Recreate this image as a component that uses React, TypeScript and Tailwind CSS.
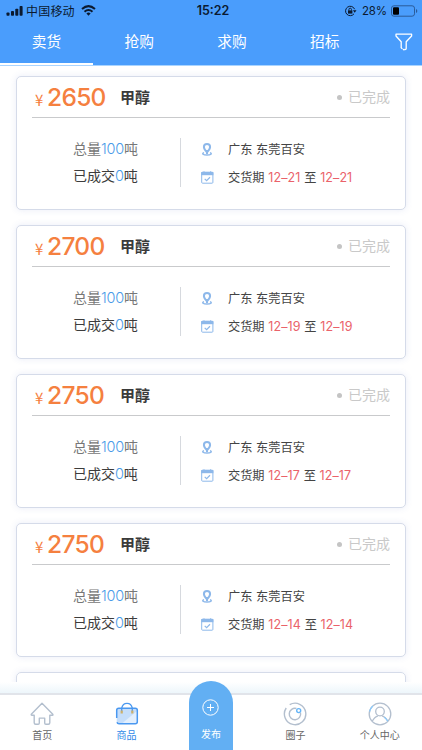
import clsx from 'clsx';

type Offer = { price: string; date: string };

const offers: Offer[] = [
    { price: '2650', date: '12–21' },
    { price: '2700', date: '12–19' },
    { price: '2750', date: '12–17' },
    { price: '2750', date: '12–14' },
];

const tabs = ['卖货', '抢购', '求购', '招标'];

const StatusBar = () => (
    <div className="grid h-[22px] grid-cols-3 items-center text-[12px] leading-[22px] text-[#0b1a30]">
        <div className="flex items-center pl-[6px]">
            <svg width="18" height="10" viewBox="0 0 18 10" fill="currentColor">
                <rect x="0.5" y="6.5" width="3" height="3.2" rx="0.8" />
                <rect x="5" y="5" width="3" height="4.7" rx="0.8" />
                <rect x="9.3" y="2.7" width="3" height="7" rx="0.8" />
                <rect x="13.6" y="0" width="3" height="9.7" rx="0.8" />
            </svg>
            <span className="-mt-px ml-[2px] whitespace-nowrap tracking-[0.2px]">中国移动</span>
            <svg className="-mt-px ml-[6px]" width="15" height="11" viewBox="0 0 15 11" fill="none" stroke="currentColor" strokeWidth="2">
                <path d="M1 4 Q7.5 -1.7 14 4" />
                <path d="M3.5 6.7 Q7.5 3.2 11.5 6.7" />
                <path d="M5.4 8.5 Q7.5 6.7 9.6 8.5 L7.5 10.8Z" fill="currentColor" stroke="none" />
            </svg>
        </div>
        <div className="pl-[4px] text-center font-[Inter] text-[12.5px] font-semibold">15:22</div>
        <div className="flex items-center justify-end pr-[4px]">
            <svg width="13" height="12" viewBox="0 0 13 12" fill="none" stroke="currentColor">
                <path d="M10.6 4.2A4.7 4.7 0 1 0 10 8.8" />
                <path d="M8.9 5.2h3.6l-1.8 2.5z" fill="currentColor" stroke="none" />
                <rect x="4" y="5.4" width="4.4" height="3.2" fill="currentColor" stroke="none" />
                <path d="M4.9 5.6V4.5a1.3 1.3 0 0 1 2.6 0v1.1" strokeWidth="0.9" />
            </svg>
            <span className="ml-[5px] font-[Inter] text-[11.5px] tracking-[-0.1px]">28%</span>
            <svg className="ml-[4px]" width="27" height="12" viewBox="0 0 27 12">
                <rect x="0.5" y="0.8" width="23" height="10.4" rx="2.4" fill="none" stroke="#2a5b99" />
                <rect x="2" y="2.3" width="6" height="7.4" rx="1" fill="#000" />
                <path d="M25 4v4q1.3-.6 1.3-2T25 4" fill="#2a5b99" />
            </svg>
        </div>
    </div>
);

const Header = () => (
    <header className="h-[66px] shrink-0 border-b border-[#a9d4ff] bg-[#4a9dfc]">
        <StatusBar />
        <nav className="flex h-[43px]">
            {tabs.map((tab, i) => (
                <div
                    key={tab}
                    className={clsx(
                        'w-[92.8px] pt-[8px] text-center text-[14.7px] leading-[22px] text-white',
                        i === 0 && 'border-b-2 border-white'
                    )}
                >
                    {tab}
                </div>
            ))}
            <div className="pt-[11px] pl-[24px]">
                <svg width="18" height="18" viewBox="0 0 18 18" fill="none" stroke="#fff" strokeWidth="1.3" strokeLinejoin="round" strokeLinecap="round">
                    <path d="M6.2 14.600V8.700L1 3V1.200h15.600V3L11.200 8.700v6.500q0 1.500-1.500 1.300" />
                    <path d="M6.400 15l2.400 1.800" strokeDasharray="0.8 1.7" />
                </svg>
            </div>
        </nav>
    </header>
);

const PinIcon = () => (
    <svg width="12" height="13" viewBox="0 0 12 13" fill="none" stroke="#8db8ea">
        <path d="M6 9.2C4 7.2 2.900 5.8 2.900 4.100a3.100 3.100 0 0 1 6.200 0c0 1.700-1.100 3.100-3.100 5.100z" strokeWidth="2" />
        <path d="M5 7h2v4H5z" fill="#8db8ea" stroke="none" />
        <path d="M3 9.600c-2.600 1-1 2.400 3 2.400s5.600-1.400 3-2.400" strokeWidth="1.400" />
    </svg>
);

const CalendarIcon = () => (
    <svg width="13" height="13" viewBox="0 0 13 13" fill="none" stroke="#8db8ea">
        <rect x="0.7" y="1.200" width="11.200" height="11" rx="0.8" />
        <path d="M0.200 1h12.200v3.200H.2z" fill="#8db8ea" stroke="none" />
        <path d="M3 0.300v1.500M9.600 0.300v1.500" />
        <path d="M3.700 7.900l1.900 1.700 3.400-3.300" strokeWidth="1.200" />
    </svg>
);

const OfferCard = ({ price, date }: Offer) => (
    <article className="h-[134px] shrink-0 rounded-[5px] border border-[#d5dbe9] bg-white px-[15px] shadow-[0_0_7px_rgba(70,100,190,0.12)]">
        <div className="flex h-[41px] items-center border-b border-[#c9cacc]">
            <span className="mt-[6px] w-[15px] pl-[3px] text-[15px] leading-none text-[#f5803f]">¥</span>
            <span className="mt-px w-[73px] font-[Inter] text-[24.5px] leading-[30px] font-medium tracking-[-0.7px] text-[#f5803f]">{price}</span>
            <span className="text-[15px] leading-[22px] font-bold text-[#3a3a3a]">甲醇</span>
            <span className="mt-px ml-auto size-[5px] rounded-full bg-[#c4c4c4]" />
            <span className="-mt-px ml-[6px] text-[14px] leading-[22px] text-[#c9c9c9]">已完成</span>
        </div>
        <div className="mt-[20px] flex h-[49px]">
            <div className="w-[149px] border-r border-[#d6d9de] pl-[41px] text-[14px]">
                <div className="-mt-[2px] leading-[24px] text-[#777]">
                    总量<span className="font-[Inter] text-[14.5px] font-light tracking-[-0.2px] text-[#4a9be8]">100</span>吨
                </div>
                <div className="mt-[2px] leading-[24px] text-[#3c3c3c]">
                    已成交<span className="font-[Inter] text-[14.5px] font-light tracking-[-0.2px] text-[#4a9be8]">0</span>吨
                </div>
            </div>
            <div className="pl-[20px] text-[12.2px] text-[#444]">
                <div className="flex h-[24px] items-center gap-[15px]">
                    <PinIcon />
                    <span className="[word-spacing:1px]">广东 东莞百安</span>
                </div>
                <div className="mt-[4px] flex h-[24px] items-center gap-[14px]">
                    <CalendarIcon />
                    <span className="whitespace-pre [word-spacing:1px]">
                        交货期 <span className="font-[Inter] text-[12.5px] tracking-[0.1px] text-[#ea626a]">{date}</span> 至 <span className="font-[Inter] text-[12.5px] tracking-[0.1px] text-[#ea626a]">{date}</span>
                    </span>
                </div>
            </div>
        </div>
    </article>
);

const HomeIcon = () => (
    <svg width="24" height="24" viewBox="0 0 24 24" fill="none" stroke="#b3bfce" strokeWidth="1.400" strokeLinejoin="round">
        <path d="M12 1.200L1.300 12.300q-.4.900.500.900h2.400v7.600q0 1.500 1.500 1.500h2.400q1.200 0 1.200-1.200v-5h5.400v5q0 1.200 1.200 1.200h2.400q1.500 0 1.500-1.500v-7.600h2.600q1-.1.400-.9z" />
    </svg>
);

const BagIcon = () => (
    <svg width="24" height="24" viewBox="0 0 24 24" fill="none">
        <rect x="1.700" y="6.200" width="20.600" height="15.600" rx="2.500" fill="#c5defb" />
        <path d="M7 21.500L22 9v11q0 1.500-2 1.500z" fill="#e3effd" />
        <path d="M1.700 16V8.200q0-2 2-2h16.600q2 0 2 2v11.600q0 2-2 2H4q-1.600 0-2-1.500" stroke="#4a98f0" strokeWidth="1.500" />
        <path d="M6.700 9.500V6.200q1-4.900 5.300-4.900t5.300 4.900v3.300" stroke="#4a98f0" strokeWidth="1.300" />
        <path d="M6.700 8.500v3M17.300 8.500v3" stroke="#cdb06a" strokeWidth="2.200" />
    </svg>
);

const CircleIcon = () => (
    <svg width="24" height="24" viewBox="0 0 24 24" fill="none" stroke="#b3bfce" strokeWidth="1.400">
        <path d="M3.200 6a10.700 10.700 0 1 0 3.500-3.300" />
        <path d="M13.400 6.500a5.700 5.700 0 1 0 4.100 4.200" />
        <circle cx="15.700" cy="8.600" r="2" stroke="#65b5f8" />
    </svg>
);

const UserIcon = () => (
    <svg width="24" height="24" viewBox="0 0 24 24" fill="none" stroke="#b3bfce" strokeWidth="1.300">
        <circle cx="12" cy="12" r="10.800" />
        <circle cx="12" cy="9.500" r="4.300" />
        <path d="M4.200 19.300Q6.500 14.800 10 13.800M14 13.800q3.500 1 5.800 5.500" />
        <path d="M1.600 9.500Q2.400 6.300 4.800 4.100M16.300 15.300q2 1.300 3.500 4" stroke="#8bc9fa" />
    </svg>
);

const navItems = [
    { label: '首页', Icon: HomeIcon },
    { label: '商品', Icon: BagIcon, active: true },
    { label: '发布', Icon: null },
    { label: '圈子', Icon: CircleIcon },
    { label: '个人中心', Icon: UserIcon },
];

const BottomNav = () => (
    <nav className="grid h-[57px] shrink-0 grid-cols-5 border-t-2 border-[#e1e4ea] bg-white text-[10px]">
        {navItems.map(({ label, Icon, active }) =>
            Icon ? (
                <div
                    key={label}
                    className={clsx('flex flex-col items-center pt-[7px]', active ? 'text-[#2f89e8]' : 'text-[#666]')}
                >
                    <Icon />
                    <span className="mt-[2px] leading-[14px]">{label}</span>
                </div>
            ) : (
                <div
                    key={label}
                    className="z-10 mx-auto -mt-[14px] flex h-[69px] w-[44px] flex-col items-center rounded-t-[22px] bg-[#62aff3] pt-[18px] text-white"
                >
                    <svg width="17" height="17" viewBox="0 0 17 17" fill="none" stroke="#fff">
                        <circle cx="8.500" cy="8.500" r="7.700" />
                        <path d="M8.500 5v7M5 8.500h7" />
                    </svg>
                    <span className="mt-[11px] leading-[14px]">{label}</span>
                </div>
            )
        )}
    </nav>
);

export default function App() {
    return (
        <div className="flex h-[750px] w-[422px] flex-col overflow-hidden bg-white font-['Noto_Sans_CJK_SC',sans-serif]">
            <Header />
            <main className="flex h-[616px] shrink-0 flex-col gap-[15px] overflow-hidden px-[16px] pt-[9.5px]">
                {offers.map((offer, i) => (
                    <OfferCard key={i} {...offer} />
                ))}
                {/* Top edge of the next card in the list */}
                <div className="h-[30px] shrink-0 rounded-t-[5px] border border-[#d5dbe9] shadow-[0_0_7px_rgba(70,100,190,0.12)]" />
            </main>
            <div className="h-[11px] shrink-0 bg-linear-to-b from-white to-[#edf6fb]" />
            <BottomNav />
        </div>
    );
}
